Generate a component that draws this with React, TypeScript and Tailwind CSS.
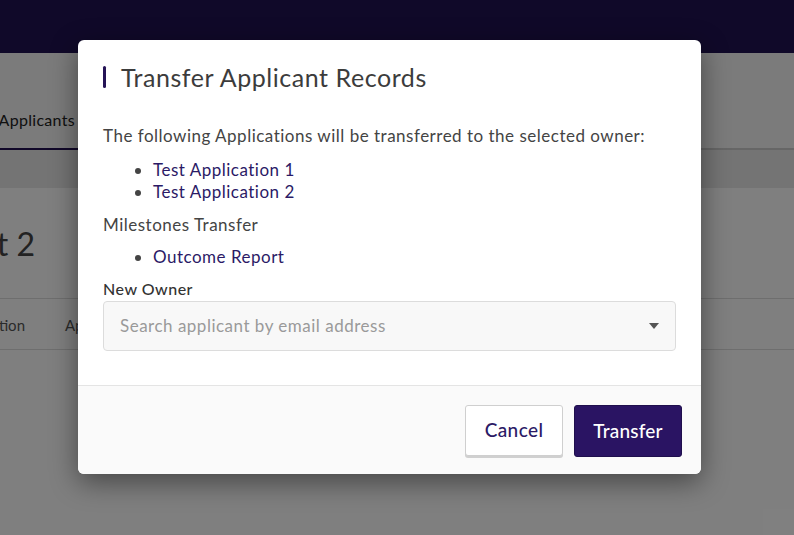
import { useState } from "react";

const applications = ["Test Application 1", "Test Application 2"];
const milestones = ["Outcome Report"];

const Caret = () => (
  <svg width="10" height="6" viewBox="0 0 10 6" className="text-[#555]">
    <path d="M0 0h10L5 6z" fill="currentColor" />
  </svg>
);

// page sitting behind the dialog
const Backdrop = () => (
  <div className="min-h-[535px] bg-white">
    <div className="h-[53px] bg-[#211353]" />
    <div className="h-[97px] bg-[#f6f6f6] flex items-end border-b-2 border-[#cccccc]">
      <div className="w-[78px] h-[42px] flex justify-end items-start border-b-2 border-[#221152] -mb-[2px] whitespace-nowrap text-[16px] tracking-[0.3px] text-[#222]">
        <span className="pr-[3px]">Applicants</span>
      </div>
    </div>
    <div className="h-[38px] bg-[#e9e9e9]" />
    <div className="h-[110px] flex items-center pt-[2px]">
      <div className="w-[35px] flex justify-end whitespace-nowrap text-[32px] text-[#444]">
        Test Applicant 2
      </div>
    </div>
    <div className="h-[52px] border-y border-[#dddddd] flex items-center gap-[40px] pt-[2px] text-[15px] text-[#555]">
      <div className="w-[25px] flex justify-end whitespace-nowrap">Application</div>
      <div>Applicant</div>
    </div>
  </div>
);

export default function App() {
  const [owner, setOwner] = useState("");

  return (
    <div className="relative w-[794px] h-[535px] overflow-hidden font-['Lato','Noto_Sans',sans-serif]">
      <Backdrop />
      <div className="absolute inset-0 bg-black/50" />

      <div className="absolute left-[78px] top-[40px] w-[623px] bg-white rounded-[6px] shadow-[0_8px_28px_rgba(0,0,0,0.45)] overflow-hidden">
        <div className="px-[25px] pt-[23px] pb-[34px] text-[17px] tracking-[0.5px]">
          <div className="flex items-center gap-[15px]">
            <span className="w-[3px] h-[22px] rounded-full bg-[#261457]" />
            <h2 className="text-[25px] leading-[28px] tracking-[0.55px] text-[#3c3c3c]">Transfer Applicant Records</h2>
          </div>

          <p className="mt-[34px] leading-[22px] text-[#444]">
            The following Applications will be transferred to the selected owner:
          </p>
          <ul className="mt-[12px] list-disc pl-[50px] leading-[22px] text-[#2b1a66] marker:text-[#444]">
            {applications.map((a) => (
              <li key={a}>{a}</li>
            ))}
          </ul>

          <p className="mt-[11px] leading-[22px] text-[#444]">Milestones Transfer</p>
          <ul className="mt-[10px] list-disc pl-[50px] leading-[22px] text-[#2b1a66] marker:text-[#444]">
            {milestones.map((m) => (
              <li key={m}>{m}</li>
            ))}
          </ul>

          <label className="block mt-[10px] text-[16px] leading-[22px] font-medium text-[#333]">New Owner</label>
          <div className="mt-[1px] h-[50px] rounded-[4px] border border-[#dcdcdc] bg-[#f8f8f8] flex items-center pl-[16px] pr-[16px]">
            <input
              value={owner}
              onChange={(e) => setOwner(e.target.value)}
              placeholder="Search applicant by email address"
              className="flex-1 bg-transparent outline-none tracking-[0.5px] text-[#333] placeholder:text-[#9a9a9a]"
            />
            <Caret />
          </div>
        </div>

        <div className="border-t border-[#e4e4e4] bg-[#fafafa] pt-[19px] pb-[17px] pr-[19px] flex justify-end gap-[11px]">
          <button className="w-[98px] h-[51px] rounded-[3px] bg-white border border-[#cfcfcf] shadow-[0_2px_0_#d0d0d0] text-[19px] tracking-[0.4px] font-medium text-[#2b1a66]">
            Cancel
          </button>
          <button className="w-[108px] h-[52px] rounded-[3px] bg-[#2a1463] border border-[#1f0f4d] text-[19px] tracking-[0.2px] font-medium text-white">
            Transfer
          </button>
        </div>
      </div>
    </div>
  );
}
